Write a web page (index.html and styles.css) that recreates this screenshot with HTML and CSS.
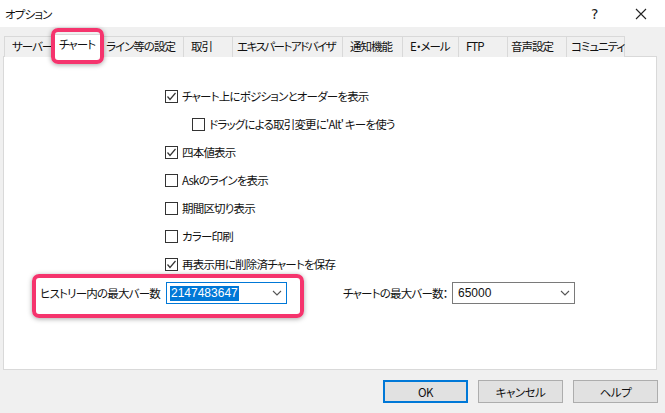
FILE: index.html
```html
<!DOCTYPE html>
<html lang="ja">
<head>
<meta charset="utf-8">
<title>オプション</title>
<link rel="stylesheet" href="styles.css">
</head>
<body>
<div class="dialog">
  <div class="titlebar">
    <span class="title">オプション</span>
    <span class="help-q">?</span>
    <span class="close">
      <svg width="12" height="12" viewBox="0 0 12 12"><path d="M1 1 L11 11 M11 1 L1 11" stroke="#222" stroke-width="1.1" fill="none"/></svg>
    </span>
  </div>

  <div class="tabs">
    <div class="tab">サーバー</div>
    <div class="tab active">チャート</div>
    <div class="tab">ライン等の設定</div>
    <div class="tab">取引</div>
    <div class="tab">エキスパートアドバイザ</div>
    <div class="tab">通知機能</div>
    <div class="tab">E・メール</div>
    <div class="tab">FTP</div>
    <div class="tab">音声設定</div>
    <div class="tab">コミュニティ</div>
  </div>

  <div class="panel">
    <div class="options">
      <label class="row"><span class="box checked"><svg viewBox="0 0 11 11"><polyline points="1.5,5.5 4,8.5 9.5,2" /></svg></span><span>チャート上にポジションとオーダーを表示</span></label>
      <label class="row sub"><span class="box"></span><span>ドラッグによる取引変更に'Alt' キーを使う</span></label>
      <label class="row"><span class="box checked"><svg viewBox="0 0 11 11"><polyline points="1.5,5.5 4,8.5 9.5,2" /></svg></span><span>四本値表示</span></label>
      <label class="row"><span class="box"></span><span>Askのラインを表示</span></label>
      <label class="row"><span class="box"></span><span>期間区切り表示</span></label>
      <label class="row"><span class="box"></span><span>カラー印刷</span></label>
      <label class="row"><span class="box checked"><svg viewBox="0 0 11 11"><polyline points="1.5,5.5 4,8.5 9.5,2" /></svg></span><span>再表示用に削除済チャートを保存</span></label>
    </div>
    <div class="combos">
      <span class="clabel first">ヒストリー内の最大バー数</span>
      <div class="combo focus"><span class="sel">2147483647</span><svg class="chev" width="10" height="6" viewBox="0 0 10 6"><polyline points="1,1 5,5 9,1"/></svg></div>
      <span class="clabel second">チャートの最大バー数：</span>
      <div class="combo wide"><span class="val">65000</span><svg class="chev" width="10" height="6" viewBox="0 0 10 6"><polyline points="1,1 5,5 9,1"/></svg></div>
    </div>
  </div>

  <div class="buttons">
    <button class="btn default">OK</button>
    <button class="btn">キャンセル</button>
    <button class="btn">ヘルプ</button>
  </div>

  <div class="mark mark-tab"></div>
  <div class="mark mark-combo"></div>
</div>
</body>
</html>
```

FILE: styles.css
```css
* { box-sizing: border-box; }
html, body { margin: 0; padding: 0; }
body {
  width: 665px;
  height: 413px;
  background: #f0f0f0;
  font-family: "Noto Sans CJK JP", "Noto Sans", sans-serif;
  font-size: 11.5px;
  letter-spacing: -0.8px;
  font-feature-settings: "palt";
  color: #111;
  overflow: hidden;
}
.dialog { position: relative; width: 665px; height: 413px; }

.titlebar {
  height: 27px;
  background: #fff;
  display: flex;
  align-items: center;
  padding-left: 5px;
}
.title { flex: 1; }
.help-q { width: 44px; font-size: 14px; letter-spacing: 0; color: #222; font-family: "DejaVu Sans", sans-serif; }
.close { width: 30px; display: flex; align-items: center; }

.tabs {
  display: flex;
  align-items: flex-end;
  height: 30px;
  padding-left: 4px;
  margin-bottom: -1px;
  position: relative;
  z-index: 1;
}
.tab {
  height: 21px;
  border: 1px solid #d9d9d9;
  border-bottom: none;
  border-left: none;
  background: #f0f0f0;
  padding: 0 0 0 7px;
  line-height: 19px;
  white-space: nowrap;
  letter-spacing: -1px;
}
.tab:first-child { border-left: 1px solid #d9d9d9; }
.tab:nth-child(1) { width: 48px; }
.tab:nth-child(2) { width: 50px; }
.tab:nth-child(3) { width: 82px; padding-left: 4px; }
.tab:nth-child(4) { width: 49px; }
.tab:nth-child(5) { width: 110px; padding-left: 4px; letter-spacing: -1.5px; }
.tab:nth-child(6) { width: 60px; }
.tab:nth-child(7) { width: 56px; }
.tab:nth-child(8) { width: 49px; }
.tab:nth-child(9) { width: 59px; padding-left: 3px; }
.tab:nth-child(10) { width: 58px; padding-left: 4px; }
.tab.active {
  background: #fff;
  height: 23px;
  border-left: 1px solid #d9d9d9;
  margin-left: -1px;
  width: 51px;
}

.panel {
  margin: 0 8px 0 3px;
  height: 314px;
  background: #fff;
  border: 1px solid #d9d9d9;
  padding: 25px 0 0 161px;
  display: flex;
  flex-direction: column;
}
.panel .combos { margin-left: -125px; }

.options { display: flex; flex-direction: column; }
.row {
  height: 28px;
  display: flex;
  align-items: center;
  gap: 4px;
  white-space: nowrap;
}
.row.sub { padding-left: 27px; }
.box {
  width: 13px;
  height: 13px;
  border: 1px solid #333;
  background: #fff;
  display: flex;
  align-items: center;
  justify-content: center;
  flex: none;
}
.box svg { width: 11px; height: 11px; }
.box polyline { fill: none; stroke: #333; stroke-width: 1.2; }

.combos {
  display: flex;
  align-items: center;
  margin-top: 4px;
  height: 22px;
  white-space: nowrap;
}
.clabel.first { width: 126px; }
.clabel.second { margin-left: 56px; width: 109px; }
.combo {
  width: 121px;
  height: 22px;
  border: 1px solid #7a7a7a;
  display: flex;
  align-items: center;
  justify-content: space-between;
  padding: 0 4px 0 3px;
  font-family: "Liberation Sans", Arial, sans-serif;
  font-size: 12px;
  letter-spacing: 0;
}
.combo.wide { width: 123px; }
.combo.focus { border-color: #0078d7; }
.sel { background: #0078d7; color: #fff; padding: 0 1px; line-height: 15px; }
.val { padding-left: 2px; }
.chev polyline { fill: none; stroke: #555; stroke-width: 1.1; }

.buttons {
  display: flex;
  justify-content: flex-end;
  gap: 10px;
  padding: 10px 7px 0 0;
}
.btn {
  width: 85px;
  height: 23px;
  background: #e1e1e1;
  border: 1px solid #adadad;
  font-family: "Noto Sans CJK JP", "Noto Sans", sans-serif;
  font-feature-settings: "palt";
  font-size: 11.5px;
  letter-spacing: -0.5px;
  color: #111;
  padding: 0;
}
.btn.default { border: 2px solid #0078d7; }

.mark {
  position: absolute;
  border: 4px solid #f5346d;
  border-radius: 7px;
  box-shadow: 0 1px 5px rgba(0,0,0,0.35);
  z-index: 5;
}
.mark-tab { left: 51px; top: 28px; width: 53px; height: 36px; }
.mark-combo { left: 32px; top: 274px; width: 272px; height: 44px; }
```
